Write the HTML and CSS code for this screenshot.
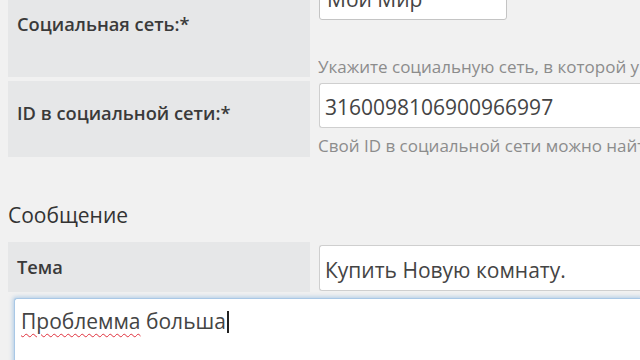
FILE: index.html
```html
<!DOCTYPE html>
<html lang="ru">
<head>
<meta charset="utf-8">
<title>Форма</title>
<link rel="stylesheet" href="styles.css">
</head>
<body>
<div class="page">
  <div class="table">
    <div class="row row-first">
      <div class="label label-center">Социальная сеть:*</div>
      <div class="field field-first">
        <div class="select"><span class="select-text">Мой Мир</span><span class="arrow"></span></div>
        <div class="hint hint-first">Укажите социальную сеть, в которой у вас есть аккаунт</div>
      </div>
    </div>
    <div class="row row-second">
      <div class="label label-top">ID в социальной сети:*</div>
      <div class="field field-second">
        <input class="input" type="text" value="3160098106900966997">
        <div class="hint hint-second">Свой ID в социальной сети можно найти в настройках профиля</div>
      </div>
    </div>
  </div>

  <h2 class="heading">Сообщение</h2>

  <div class="row row-topic">
    <div class="label label-center">Тема</div>
    <div class="field field-topic">
      <input class="input input-topic" type="text" value="Купить Новую комнату.">
    </div>
  </div>

  <div class="textarea"><span class="misspelled">Проблемма</span> больша<span class="caret"></span></div>
</div>
</body>
</html>
```

FILE: styles.css
```css
html, body {
  margin: 0;
  padding: 0;
  background: #f1f1f1;
  overflow: hidden;
  width: 640px;
  height: 360px;
}

body {
  font-family: "Open Sans", "Liberation Sans", sans-serif;
  color: #333;
}

.page {
  padding-left: 8px;
  width: 632px;
}

.table {
  margin-top: -30px;
  display: flex;
  flex-direction: column;
  gap: 4px;
}

.row {
  display: grid;
  grid-template-columns: 302px 1fr;
  column-gap: 8px;
}

.label {
  background: #e6e7e8;
  font-weight: 600;
  font-size: 18.3px;
  line-height: 24px;
  color: #3a3a3a;
  padding: 0 9px;
  display: flex;
}

.label-center {
  align-items: center;
}

.label-top {
  align-items: flex-start;
  padding-top: 20px;
}

.field {
  display: flex;
  flex-direction: column;
  align-items: flex-start;
  min-width: 0;
  overflow: hidden;
}

.field-first {
  padding-top: 6px;
}

.field-second {
  padding-top: 2px;
  padding-bottom: 1px;
}

.field-topic {
  padding-top: 3px;
  padding-bottom: 1px;
}

.select {
  margin-left: 1px;
  box-sizing: border-box;
  width: 188px;
  height: 44px;
  background: #fff;
  border: 1px solid #c4c4c4;
  border-radius: 3px;
  display: flex;
  align-items: center;
  justify-content: space-between;
  padding: 2px 10px 0 7px;
  font-size: 21px;
  color: #444;
}

.arrow {
  width: 0;
  height: 0;
  border-left: 3px solid transparent;
  border-right: 3px solid transparent;
  border-top: 4px solid #222;
  margin-top: -8px;
}

.hint {
  font-size: 17px;
  line-height: 20px;
  color: #8c8c8c;
  white-space: nowrap;
}

.hint-first {
  margin-top: 37px;
}

.hint-second {
  margin-top: 8px;
}

.input {
  margin: 0 0 0 1px;
  box-sizing: border-box;
  width: 340px;
  height: 45px;
  border: 1px solid #cfcfcf;
  border-right: none;
  border-radius: 3px 0 0 3px;
  background: #fff;
  padding: 3px 5px 0;
  font-family: "Open Sans", "Liberation Sans", sans-serif;
  font-size: 21px;
  color: #444;
  outline: none;
}

.input-topic {
  height: 46px;
}

.heading {
  margin: 44px 0 13px;
  font-size: 21px;
  line-height: 28px;
  font-weight: 400;
  color: #333;
}

.textarea {
  margin: 6px 0 0 6px;
  box-sizing: border-box;
  width: 630px;
  height: 70px;
  background: #fff;
  border: 1px solid #a9c8e6;
  border-right: none;
  border-bottom: none;
  border-radius: 3px 0 0 0;
  box-shadow: -1px -1px 4px rgba(110, 165, 220, 0.5);
  padding: 8px 6px;
  font-size: 21px;
  line-height: 29px;
  color: #444;
}

.misspelled {
  text-decoration: underline wavy #e0303c;
  text-decoration-thickness: 1px;
  text-underline-offset: 4px;
}

.caret {
  display: inline-block;
  width: 2px;
  height: 22px;
  background: #222;
  vertical-align: -4px;
  margin-left: 1px;
}
```
